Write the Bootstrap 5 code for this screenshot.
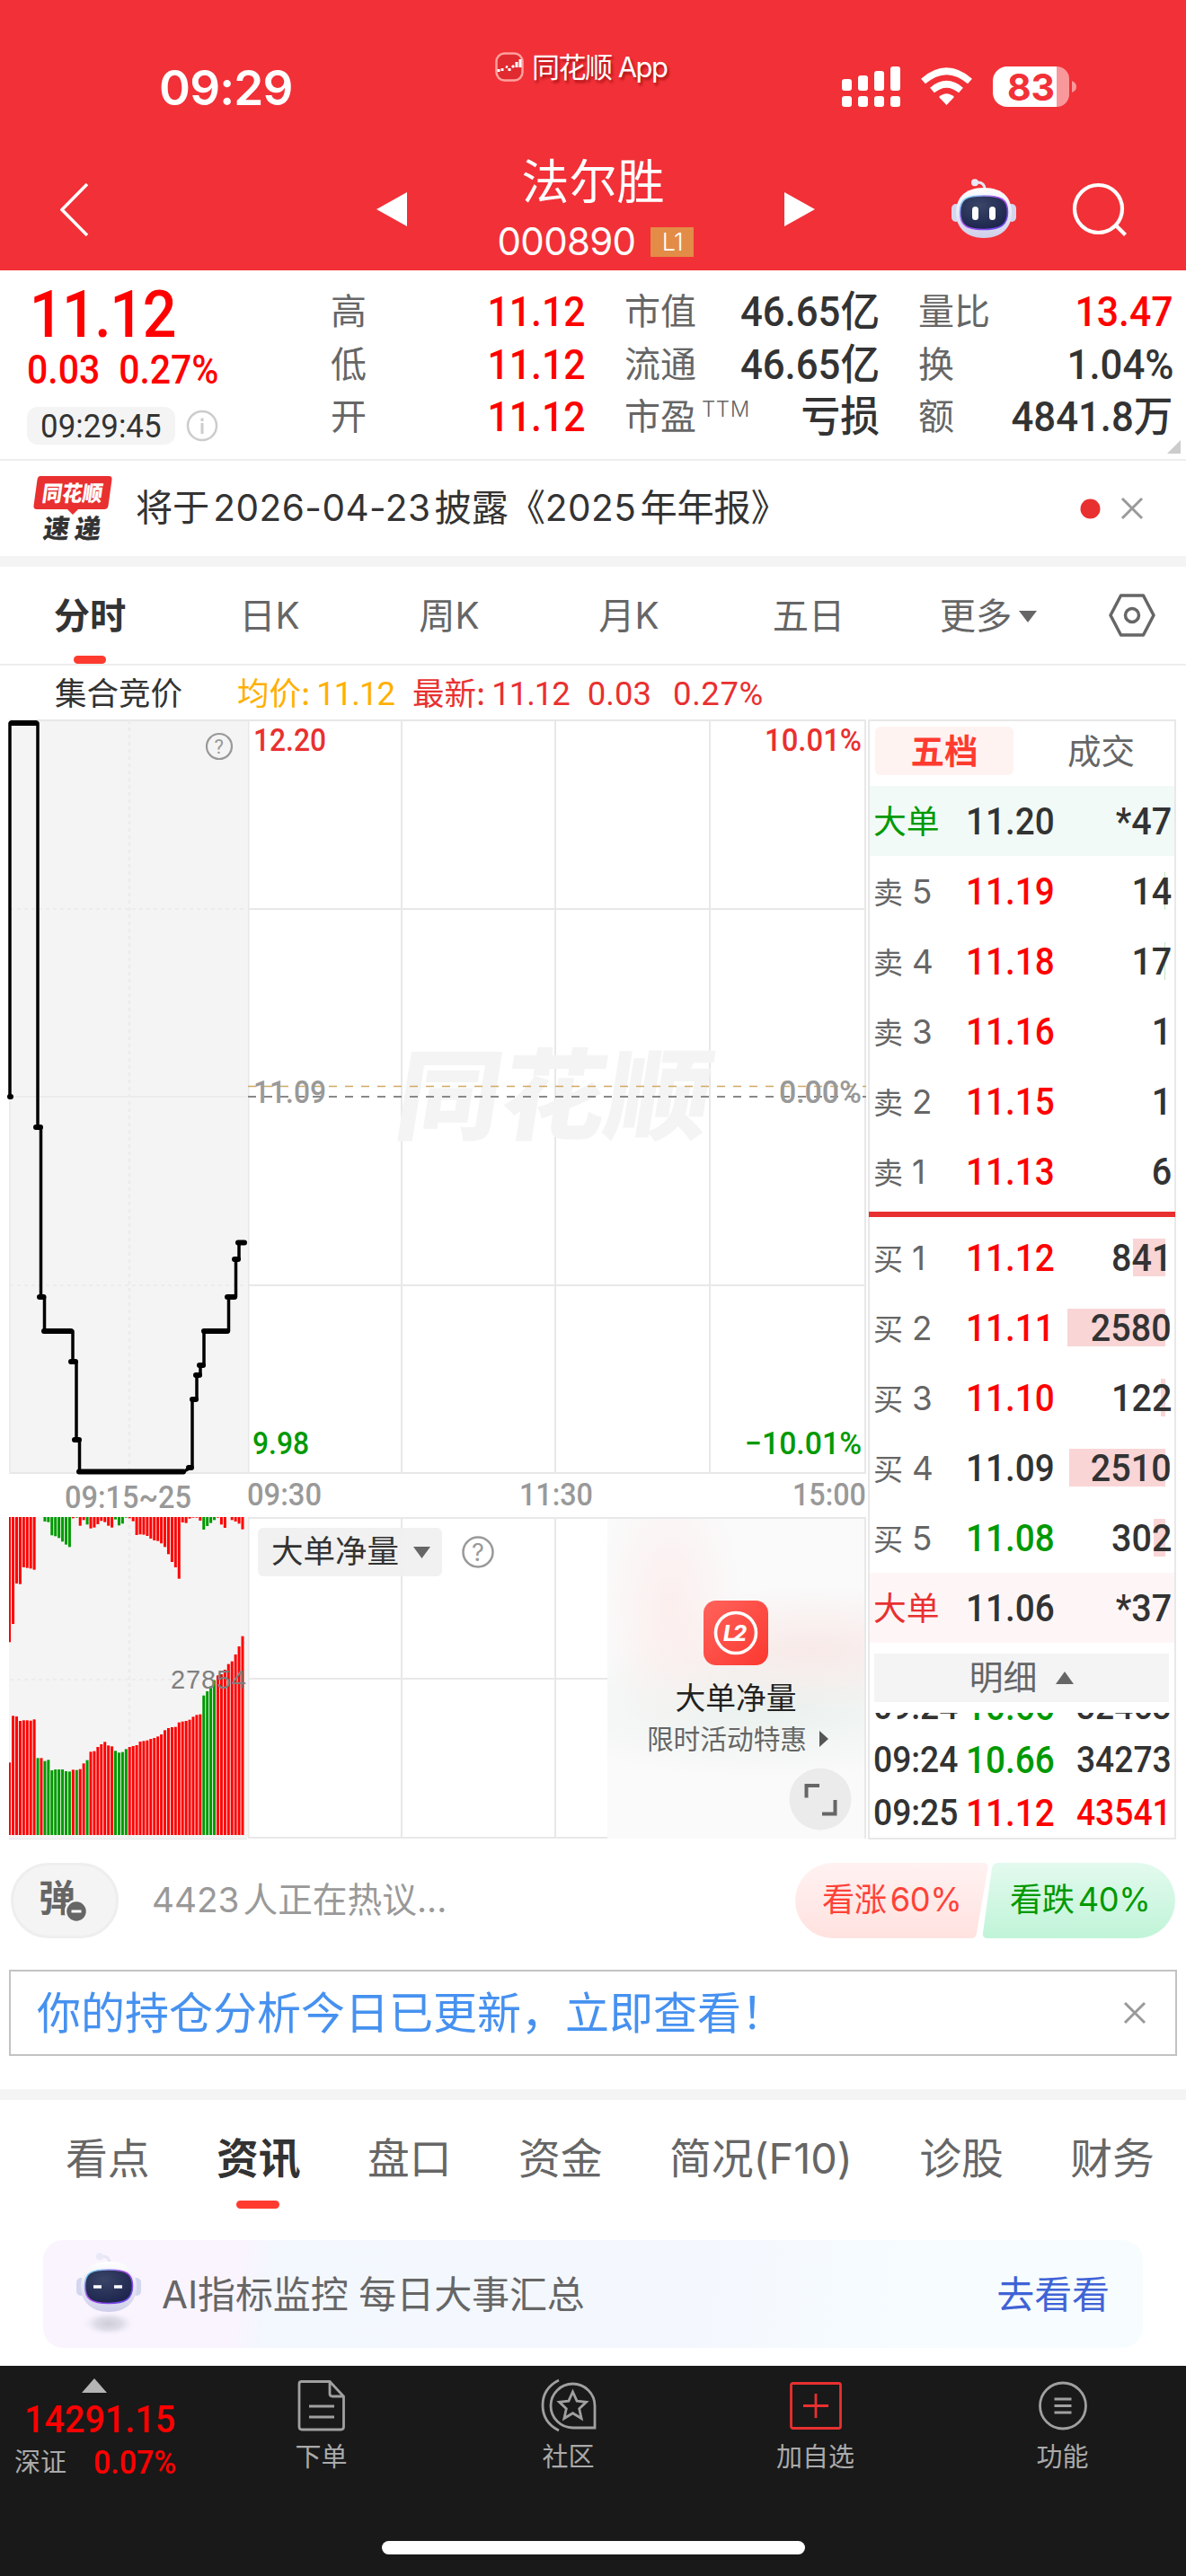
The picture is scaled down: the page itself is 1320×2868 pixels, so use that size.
<!DOCTYPE html>
<html lang="zh-CN">
<head>
<meta charset="utf-8">
<meta name="viewport" content="width=device-width, initial-scale=1">
<title>法尔胜 000890</title>
<link href="https://cdn.jsdelivr.net/npm/bootstrap@5.3.0/dist/css/bootstrap.min.css" rel="stylesheet">
<style>
body{width:1320px;height:2868px;overflow:hidden;background:#fff;color:#333;font-family:Inter,"Noto Sans CJK SC",sans-serif;font-size:40px;line-height:1}
svg{display:block;flex:none}
.dig{font-family:Roboto,"Noto Sans CJK SC",sans-serif;font-weight:500;white-space:nowrap}
.slim{display:inline-block;transform:scaleX(.93);transform-origin:left center}
.slim-r{display:inline-block;transform:scaleX(.93);transform-origin:right center}
.c-up{color:#f00}.c-down{color:#090}.c-sub{color:#666}.c-dim{color:#999}.c-red{color:#e93030}
.top-head{background:#f23037;color:#fff;height:301px}
.status-row{height:140px;padding:54px 122px 0 177px}
.clock{font-size:53px;font-weight:600;width:373px;letter-spacing:-.8px;padding-top:18px}
.app-tag{font-size:31px;width:388px;height:40px;gap:9px;padding-left:2px;text-shadow:2px 3px 3px rgba(120,0,0,.6);letter-spacing:-1.5px;white-space:nowrap}
.title-row{height:161px;padding:0 58px 0 67px}
.nav-mid{width:420px;padding-top:35px}
.stock-name{font-size:53px;line-height:56px;margin-right:6px}
.stock-code{font-size:42px;height:40px;letter-spacing:-.7px;margin-top:18px}
.lv-tag{background:#e38c48;font-size:27px;width:48px;height:33px;line-height:33px;font-weight:300}
.quote{height:212px;border-bottom:2px solid #eee}
.quote-left{width:368px;padding:12px 0 0 30px}
.big-price{font-size:73px;letter-spacing:-1.6px;line-height:74px;height:75px;padding-left:3px;transform:scaleX(.91);transform-origin:left center}
.chg{font-size:45px;gap:23px;height:61px;line-height:48px;transform:scaleX(.91);transform-origin:left center}
.time-chip{background:#f4f4f4;border-radius:12px;width:165px;height:42px;line-height:42px;font-size:37.5px;font-weight:400}
.time-chip span{transform-origin:center}
.q-group{width:282px;padding-top:17px}
.q-group>div{height:58.600px}
.q-group .dig{font-size:46.5px;display:inline-block;transform:scaleX(.94);transform-origin:right center;margin-right:-2px}
.q-group .dig.c-up{transform:scaleX(.92)}
.ttm{font-size:24px;font-weight:300;letter-spacing:.6px;margin:-16px auto 0 6px}
.fold{position:absolute;right:6px;bottom:6px}
.news{height:106px;padding:0 47px 0 37px}
.news-text{font-size:41.2px;letter-spacing:-.1px;white-space:nowrap}
.news-text span{font-size:40.5px;letter-spacing:.5px}
.band{height:12px;background:#f4f4f4}
.k-tabs{height:110px;border-bottom:2px solid #eee;color:#666;font-size:40.3px}
.k-tabs>div{width:200px;position:relative;height:100%;padding-top:3px}
.k-tabs .on{color:#333;font-weight:600}
.k-tabs .on::after{content:"";position:absolute;left:82px;bottom:0;width:36px;height:9px;border-radius:5px;background:#ff3b30}
.legend-row{height:60px;font-size:35.5px;padding:4px 0 0 61px;white-space:nowrap}
.legend-row .dig{font-weight:400;font-size:36.5px}
.legend-row .in{letter-spacing:-1px;margin-left:7px}
.chart-zone{height:1247px}
.plot{position:relative;width:966px}
.pick{position:absolute;left:287px;top:900px;width:205px;height:54px;border-radius:6px;background:rgba(240,240,240,.92);font-size:35.5px;padding:0 13px 0 15px}
.ask{position:absolute;left:514px;top:908px}
.promo{position:absolute;left:676px;top:890px;width:286px;height:356px;padding-top:91px;background:radial-gradient(ellipse 80px 150px at 70px 95px,rgba(252,236,235,.8),transparent),radial-gradient(ellipse 220px 70px at 230px 145px,rgba(248,230,228,.8),transparent),radial-gradient(ellipse 270px 80px at 180px 210px,rgba(232,240,236,.9),transparent),#fafafa}
.promo-t{font-size:33.8px;color:#222;margin-top:19px;line-height:36px}
.promo-s{font-size:29.7px;color:#666;margin-top:11px;line-height:32px;gap:14px;padding-left:4px}
.expand{position:absolute;right:14px;bottom:9px}
.book{width:343px;border:2px solid #e8e8e8}
.bk-tabs{height:72px;padding:6px 8px 0 6px;font-size:37.5px}
.bk-tabs>div{height:54px;width:50%;border-radius:6px;padding-top:2px}
.bk-tabs .on{background:#fff3f2;color:#ff3b30;font-weight:600;flex:none;width:154px}
.lv{position:relative;height:78px;padding:3px 5px 0 4px}
.lv .nm{width:103px;font-size:36.8px;color:#666;white-space:nowrap}
.lv .nm span{font-size:33px;margin-right:10px}
.lv .dig{font-size:42.5px}
.lv .slim{transform:scaleX(.91)}
.lv .qty{margin-right:-2px}
.vol{position:absolute;right:10px;top:18px;height:42px;background:#f9d5d6}
.vol.ask-vol{background:#bfe6bf}
.split{height:18px;padding-top:6px;margin:0 -1px}
.split div{height:6px;background:#e93030}
.detail-bar{height:54px;margin:12px 6px 12px 5px;background:#f4f4f4;color:#666;font-size:37.8px;gap:21px}
.ticks{height:138px;overflow:hidden}
.ticks>div{height:59px;flex:none;padding:7px 3px 0 4px}
.ticks .dig{font-size:40px;line-height:46px}
.ticks .hm{width:103px}
.ticks .px{font-size:42.5px;transform:scaleX(.91)}
.talk{height:145px;padding:0 12px 10px}
.dan{position:relative;width:120px;height:84px;border-radius:42px;background:#f4f4f4;border:3px solid #eee;font-size:41px;font-weight:700;color:#666;padding:0 17px 4px 0}
.dan b{font-weight:700}
.dan svg{position:absolute;left:57px;top:38px}
.talk-text{font-size:38.7px;margin-left:37px;color:#999;letter-spacing:0}
.vote{position:relative;width:423px;height:84px}
.vote svg{position:absolute;left:0;top:0}
.vote div{position:relative;font-size:36.2px;width:50%;letter-spacing:-.3px}
.notice{height:96px;margin:0 10px;border:2px solid #c3c3c3;padding:0 32px 0 29px;color:#4691f0;font-size:49px}
.info-tabs{height:134px;padding:0 0 3px 73px;gap:74.400px;color:#666;font-size:46.8px;white-space:nowrap}
.info-tabs .on{position:relative;color:#333;font-weight:600}
.info-tabs .on::after{content:"";position:absolute;left:22px;top:70px;width:48px;height:9px;border-radius:5px;background:#ff3b30}
.ai{height:120px;margin:22px 48px 20px;border-radius:22px;background:linear-gradient(98deg,#faf4ff 18%,#f3f7fe 21%,#f4f8fe 60%,#f7fdff 85%);color:#666;font-size:42px;padding:2px 37px 0 37px;letter-spacing:-.1px}
.foot{background:#191919;height:234px;color:#aaa;font-size:29px}
.foot .idx{width:220px;padding:14px 0 0 16px}
.foot .idx-n{font-size:42.5px;margin:9px 0 0 11px}
.foot .idx-p{font-size:36.5px;margin-left:30px}
.foot .cell{width:275px;padding-top:14px;gap:13px}
.home-ind{width:471px;height:15px;border-radius:8px;background:#fff;position:absolute;left:425px;bottom:24px}
</style>
</head>
<body>
<svg width="0" height="0" class="position-absolute">
  <defs>
    <linearGradient id="shell" x1="0" y1="0" x2="0" y2="1"><stop offset="0" stop-color="#fff"/><stop offset="1" stop-color="#cfcfea"/></linearGradient>
    <linearGradient id="rim" x1="0" y1="0" x2="1" y2="1"><stop offset="0" stop-color="#6ff0f0"/><stop offset=".45" stop-color="#b04cf0"/><stop offset="1" stop-color="#5a48e8"/></linearGradient>
    <radialGradient id="visor" cx=".4" cy=".3" r=".8"><stop offset="0" stop-color="#3a4568"/><stop offset="1" stop-color="#19214a"/></radialGradient>
    <symbol id="bot" viewBox="0 0 72 66">
      <path d="M37 12Q37 4 29 4" fill="none" stroke="#e6e6f4" stroke-width="3"/><circle cx="26" cy="4.2" r="4" fill="#e9e9f6"/>
      <rect x="0" y="28" width="10" height="20" rx="5" fill="#d4d6ee"/><rect x="62" y="28" width="10" height="20" rx="5" fill="#d4d6ee"/>
      <path d="M36 10C58 10 67 22 67 38S56 66 36 66 5 54 5 38 14 10 36 10Z" fill="url(#shell)"/>
      <path d="M36 19C55 19 62.500 23 62.500 37S55 56.500 36 56.500 9.500 52 9.500 37 17 19 36 19Z" fill="url(#visor)" stroke="url(#rim)" stroke-width="1.600"/>
    </symbol>
    <linearGradient id="gUp" x1="0" y1="0" x2="0" y2="1"><stop offset="0" stop-color="#fff2f1"/><stop offset="1" stop-color="#ffe2e0"/></linearGradient>
    <linearGradient id="gDn" x1="0" y1="0" x2="0" y2="1"><stop offset="0" stop-color="#e3faee"/><stop offset="1" stop-color="#c0f4d8"/></linearGradient>
    <linearGradient id="gL2" x1="0" y1="0" x2="1" y2="1"><stop offset="0" stop-color="#ff635c"/><stop offset="1" stop-color="#fb382f"/></linearGradient>
  </defs>
</svg>

<header class="top-head">
  <div class="status-row d-flex align-items-start">
    <div class="clock">09:29</div>
    <div class="app-tag d-flex align-items-center">
      <svg width="32" height="33" viewBox="0 0 32 33"><rect x="1.500" y="1.500" width="29" height="30" rx="9" fill="#e02a30" stroke="#ffa09c" stroke-width="2.500"/><path d="M4 22V19M8 21V18M12 16l2 1M16 18v3M19 15l2 2M24 17v-6M28 17V8" stroke="#fff" stroke-width="3"/></svg>
      <span>同花顺 App</span>
    </div>
    <svg class="ms-auto" width="262" height="66" viewBox="936 54 262 66">
      <g fill="#fff"><rect x="937" y="88" width="11" height="13" rx="3"/><rect x="955" y="84" width="11" height="17" rx="3"/><rect x="973" y="79" width="11" height="22" rx="3"/><rect x="991" y="74" width="11" height="27" rx="3"/>
      <rect x="937" y="107" width="11" height="12" rx="3"/><rect x="955" y="107" width="11" height="12" rx="3"/><rect x="973" y="107" width="11" height="12" rx="3"/><rect x="991" y="107" width="11" height="12" rx="3"/>
      <path d="M1053.500 117l-8.500-9q8.500-7.500 17 0z"/></g>
      <path d="M1037.500 100.500q16-13.500 32 0M1027.500 90.500q26-22.500 52 0" fill="none" stroke="#fff" stroke-width="7.500"/>
      <path d="M1121 74h55v45h-55a16 16 0 0 1-16-16v-13a16 16 0 0 1 16-16z" fill="#fff"/><path d="M1176 74a14 14 0 0 1 14 14v17a14 14 0 0 1-14 14zM1193 90q5 2 5 6.500t-5 6.500z" fill="#fff" fill-opacity=".5"/>
      <text x="1121" y="111.500" font-size="41" font-weight="700" fill="#f23037" textLength="53">83</text>
    </svg>
  </div>
  <div class="title-row d-flex align-items-start">
    <svg width="33" height="126" viewBox="67 140 33 126"><path d="M97 205L69 233.500 97 262" fill="none" stroke="#fff" stroke-width="3.500"/></svg>
    <svg class="ms-auto" width="34" height="126" viewBox="419 140 34 126"><path d="M453 214v38l-34-19z" fill="#fff"/></svg>
    <div class="nav-mid d-flex flex-column align-items-center">
      <div class="stock-name">法尔胜</div>
      <div class="stock-code d-flex align-items-center"><span>000890</span><span class="lv-tag text-center" style="margin-left:17px">L1</span></div>
    </div>
    <svg width="34" height="126" viewBox="873 140 34 126"><path d="M873 214v38l34-19z" fill="#fff"/></svg>
    <svg style="margin-left:152px" width="203" height="126" viewBox="1059 140 203 126">
      <use href="#bot" x="1059" y="199" width="72" height="66"/><rect x="1082" y="230" width="7" height="15" rx="3.500" fill="#fff"/><rect x="1101" y="230" width="7" height="15" rx="3.500" fill="#fff"/>
      <circle cx="1222.500" cy="232.500" r="26.500" fill="none" stroke="#fff" stroke-width="4.200"/><path d="M1241.500 250.500l11 11" stroke="#fff" stroke-width="4.200"/>
    </svg>
  </div>
</header>

<section class="quote d-flex position-relative">
  <div class="quote-left">
    <div class="big-price dig c-up">11.12</div>
    <div class="chg dig c-up d-flex"><span>0.03</span><span>0.27%</span></div>
    <div class="d-flex align-items-center" style="gap:12px;margin-top:4px">
      <div class="time-chip dig text-center"><span class="slim">09:29:45</span></div>
      <svg width="36" height="36"><circle cx="18" cy="18" r="16" fill="none" stroke="#ccc" stroke-width="2.500"/><path d="M18 9.500v3.500M18 15v12" stroke="#ccc" stroke-width="3"/></svg>
    </div>
  </div>
  <div class="q-group">
    <div class="d-flex align-items-center justify-content-between"><span class="c-sub">高</span><span class="dig c-up">11.12</span></div>
    <div class="d-flex align-items-center justify-content-between"><span class="c-sub">低</span><span class="dig c-up">11.12</span></div>
    <div class="d-flex align-items-center justify-content-between"><span class="c-sub">开</span><span class="dig c-up">11.12</span></div>
  </div>
  <div class="q-group" style="margin-left:45px">
    <div class="d-flex align-items-center justify-content-between"><span class="c-sub">市值</span><span class="dig">46.65亿</span></div>
    <div class="d-flex align-items-center justify-content-between"><span class="c-sub">流通</span><span class="dig">46.65亿</span></div>
    <div class="d-flex align-items-center justify-content-between"><span class="c-sub">市盈</span><span class="ttm c-sub">TTM</span><span class="dig">亏损</span></div>
  </div>
  <div class="q-group" style="margin-left:45px">
    <div class="d-flex align-items-center justify-content-between"><span class="c-sub">量比</span><span class="dig c-up">13.47</span></div>
    <div class="d-flex align-items-center justify-content-between"><span class="c-sub">换</span><span class="dig">1.04%</span></div>
    <div class="d-flex align-items-center justify-content-between"><span class="c-sub">额</span><span class="dig">4841.8万</span></div>
  </div>
  <svg class="fold" width="15" height="15"><path d="M15 0v15H0z" fill="#ccc"/></svg>
</section>

<section class="news d-flex align-items-center">
  <svg width="89" height="76" viewBox="37 527 89 76"><path d="M45 529h76q4 0 3.500 4l-4 29q-.6 4-4.500 4H87l-6 6-6-6H41q-4 0-3.500-4l4-29q.6-4 3.500-4z" fill="#e93030"/>
    <text transform="translate(46 557) skewX(-8)" font-size="24" font-weight="900" fill="#fff" textLength="67" lengthAdjust="spacingAndGlyphs">同花顺</text>
    <text transform="translate(47 597.500) skewX(-8)" font-size="29" font-weight="900" fill="#333" textLength="64">速递</text></svg>
  <div class="news-text" style="margin-left:25px">将于<span class="mx-1">2026-04-23</span>披露《<span>2025</span><b class="ms-1 fw-normal">年年报》</b></div>
  <svg class="ms-auto" width="72" height="28" viewBox="1201 551 72 28"><circle cx="1213.500" cy="565.500" r="11" fill="#e93030"/><path d="M1249 554l22 22M1271 554l-22 22" stroke="#999" stroke-width="3"/></svg>
</section>
<div class="band"></div>

<nav class="k-tabs d-flex">
  <div class="on d-flex align-items-center justify-content-center">分时</div>
  <div class="d-flex align-items-center justify-content-center">日K</div>
  <div class="d-flex align-items-center justify-content-center">周K</div>
  <div class="d-flex align-items-center justify-content-center">月K</div>
  <div class="d-flex align-items-center justify-content-center">五日</div>
  <div class="d-flex align-items-center justify-content-center gap-2">更多<svg width="20" height="13"><path d="M0 0h20L10 13z" fill="#666"/></svg></div>
  <svg class="align-self-center" style="margin-left:34px" width="52" height="48" viewBox="0 0 52 48"><path d="M13.500 2h25L50 24 38.500 46h-25L2 24z" fill="none" stroke="#666" stroke-width="3.500" stroke-linejoin="round"/><circle cx="26" cy="24" r="7.500" fill="none" stroke="#666" stroke-width="3.500"/></svg>
</nav>

<div class="legend-row d-flex align-items-center">
  <span>集合竞价</span>
  <span style="margin-left:61px;color:#ffb000">均价:<span class="dig in">11.12</span></span>
  <span class="c-red" style="margin-left:20px">最新:<span class="dig in">11.12</span></span>
  <span class="dig c-red" style="margin-left:20px">0.03</span>
  <span class="dig c-red" style="margin-left:24px;letter-spacing:.6px">0.27%</span>
</div>

<section class="chart-zone d-flex">
  <div class="plot">
    <svg id="plot" width="966" height="1247" viewBox="0 801 966 1247" font-family="Roboto,'Noto Sans CJK SC',sans-serif" font-weight="500" font-size="35">
      <rect x="10" y="801" width="265" height="840" fill="#f4f4f4"/><rect x="10" y="1689" width="265" height="359" fill="#f4f4f4"/>
      <g fill="none" stroke="#e8e8e8" stroke-width="2">
        <path d="M10 802H964M10 1640H964M276.500 802V1640M963 802V1640M277 1012H963M277 1431H963M447 802V1640M618 802V1640M790 802V1640"/>
        <path d="M276 1690H964M276 1869H963M276.500 1690V2046M963 1690V2046M276 2046H964M10 2048H275M447 1690V2046M618 1690V2046"/>
        <path d="M11 802V1640M11 1221H275" stroke="#ececec"/>
        <path d="M11 1012H275M11 1431H275M11 1870H275" stroke="#ececec" stroke-dasharray="4 4"/>
        <path d="M144 802V1640M144 1690V2046" stroke="#ececec" stroke-width="3" stroke-dasharray="4 4"/>
      </g>
      <text transform="translate(436 1260) skewX(-9)" font-family="Noto Sans CJK SC" font-size="110" font-weight="900" fill="#f4f4f4" textLength="350" lengthAdjust="spacingAndGlyphs">同花顺</text>
      <path d="M276 1209.500H964" stroke="#d0a866" stroke-width="1.500" stroke-dasharray="9 9"/>
      <path d="M276 1221H964" stroke="#888" stroke-width="2" stroke-dasharray="9 9"/>
      <path fill="none" stroke="#000" stroke-width="3.500" stroke-linejoin="round" d="M13 1221h-2V805H42V1255H45.500V1444H49.500V1482H81V1516H85V1603H88.500V1638H205L214 1633V1558H219V1531H223V1520H227V1482H254.500V1444H262.500V1402H266V1383.500H273"/>
      <g stroke="#000" stroke-width="6" stroke-linecap="round"><path d="M13 805H40M40 1255h5M44 1444h4.500M49 1482H79M79 1516h5M83 1603h5M88 1638.500H204M210 1634h3M214 1558h4M218 1531h4M222 1520h4M227 1482H253M253 1444h8M261 1402h4M265 1383.500h7M11 1221h1"/></g>
      <g fill="#e93030"><text x="282" y="836" textLength="81" lengthAdjust="spacingAndGlyphs">12.20</text><text x="851" y="836" textLength="108" lengthAdjust="spacingAndGlyphs">10.01%</text></g>
      <g fill="#999"><text x="282" y="1227.500" textLength="81" lengthAdjust="spacingAndGlyphs">11.09</text><text x="867" y="1227.500" textLength="92" lengthAdjust="spacingAndGlyphs">0.00%</text>
        <text x="72" y="1678.500" textLength="141" lengthAdjust="spacingAndGlyphs">09:15~25</text><text x="275" y="1675.500" textLength="83" lengthAdjust="spacingAndGlyphs">09:30</text><text x="578" y="1675.500" textLength="82" lengthAdjust="spacingAndGlyphs">11:30</text><text x="882" y="1675.500" textLength="82" lengthAdjust="spacingAndGlyphs">15:00</text></g>
      <g fill="#090"><text x="281" y="1619" textLength="63" lengthAdjust="spacingAndGlyphs">9.98</text><text x="829" y="1619" textLength="130" lengthAdjust="spacingAndGlyphs">−10.01%</text></g>
      <g id="bars"></g>
      <text x="190" y="1880" font-family="Liberation Sans" font-weight="400" font-size="29" fill="#808080" textLength="84">27854</text>
      <g transform="translate(244 831)"><circle r="14" fill="none" stroke="#999" stroke-width="2.200"/><text x="-5.500" y="8" font-size="22" font-weight="400" fill="#999">?</text></g>
    </svg>
    <div class="pick d-flex align-items-center justify-content-between"><span>大单净量</span><svg width="19" height="13"><path d="M0 0h19L9.500 13z" fill="#666"/></svg></div>
    <svg class="ask" width="36" height="38" viewBox="-18 -19 36 38"><circle r="16.500" fill="none" stroke="#999" stroke-width="2.500"/><text x="-7" y="9.500" font-size="27" fill="#999">?</text></svg>
    <div class="promo d-flex flex-column align-items-center">
      <svg width="72" height="72" viewBox="-36 -36 72 72"><rect x="-36" y="-36" width="72" height="72" rx="14" fill="url(#gL2)"/><circle r="22.500" fill="none" stroke="#fff" stroke-width="3.600"/><text x="-14" y="9" font-size="24" font-weight="800" font-style="italic" fill="#fff" textLength="26">L2</text></svg>
      <div class="promo-t">大单净量</div>
      <div class="promo-s d-flex align-items-center">限时活动特惠<svg width="10" height="18"><path d="M0 0l10 9L0 18z" fill="#555"/></svg></div>
      <svg class="expand" width="70" height="70"><circle cx="35" cy="35" r="34.500" fill="#ebebeb"/><path d="M19.500 33.500V20H34M37 51.500H51.500V36" fill="none" stroke="#666" stroke-width="4"/></svg>
    </div>
  </div>

  <aside class="book">
    <div class="bk-tabs d-flex"><div class="on d-flex align-items-center justify-content-center">五档</div><div class="c-sub d-flex align-items-center justify-content-center flex-grow-1 ps-4">成交</div></div>
    <div id="sell"></div>
    <div class="split"><div></div></div>
    <div id="buy"></div>
    <div class="detail-bar d-flex align-items-center justify-content-center">明细<svg width="20" height="14"><path d="M0 14h20L10 0z" fill="#666"/></svg></div>
    <div class="ticks d-flex flex-column justify-content-end">
      <div class="d-flex align-items-center"><div class="hm"><span class="dig slim">09:24</span></div><span class="dig px slim c-down">10.66</span><span class="dig slim-r ms-auto">32463</span></div>
      <div class="d-flex align-items-center"><div class="hm"><span class="dig slim">09:24</span></div><span class="dig px slim c-down">10.66</span><span class="dig slim-r ms-auto">34273</span></div>
      <div class="d-flex align-items-center"><div class="hm"><span class="dig slim">09:25</span></div><span class="dig px slim c-up">11.12</span><span class="dig slim-r ms-auto c-up">43541</span></div>
    </div>
  </aside>
</section>

<section class="talk d-flex align-items-center">
  <div class="dan d-flex align-items-center justify-content-center"><b>弹</b><svg width="26" height="26"><circle cx="13" cy="13" r="12" fill="#666" stroke="#f4f4f4" stroke-width="2.500"/><path d="M7.500 13h11" stroke="#fff" stroke-width="3"/></svg></div>
  <div class="talk-text">4423<span class="ms-1">人正在热议...</span></div>
  <div class="vote d-flex align-items-center ms-auto">
    <svg width="423" height="84"><path d="M42 0H210q5 0 4.500 5L202 78q-1 6-6 6H42A42 42 0 0 1 42 0z" fill="url(#gUp)"/><path d="M381 0H225q-5 0-6 6L209 78q-1 6 5 6H381A42 42 0 0 0 381 0z" fill="url(#gDn)"/></svg>
    <div class="text-center ps-1" style="color:#ff4238">看涨<span class="ms-1">60%</span></div><div class="text-center c-down">看跌<span class="ms-1">40%</span></div>
  </div>
</section>

<section class="notice d-flex align-items-center justify-content-between"><span>你的持仓分析今日已更新，立即查看！</span><svg width="26" height="26"><path d="M2 2l22 22M24 2L2 24" stroke="#999" stroke-width="3"/></svg></section>
<div class="band" style="margin-top:37px"></div>

<nav class="info-tabs d-flex align-items-center"><span>看点</span><span class="on">资讯</span><span>盘口</span><span>资金</span><span>简况(F10)</span><span>诊股</span><span>财务</span></nav>
<section class="ai d-flex align-items-center">
  <svg width="72" height="96" viewBox="0 0 72 96"><defs><radialGradient id="shade"><stop offset="0" stop-color="#cfcdd8"/><stop offset=".5" stop-color="#dfdde8"/><stop offset="1" stop-color="#f6f2fc" stop-opacity="0"/></radialGradient></defs><ellipse cx="36" cy="80" rx="30" ry="14" fill="url(#shade)"/><use href="#bot" y="1" width="72" height="66"/><path d="M19 39h9M42 39h9" stroke="#fff" stroke-width="3.500"/></svg>
  <span style="margin-left:23px">AI指标监控 每日大事汇总</span><span class="ms-auto" style="color:#3f63d6">去看看</span>
</section>

<footer class="foot d-flex position-relative">
  <div class="idx">
    <svg style="margin-left:75px" width="28" height="16"><path d="M0 16L14 0l14 16z" fill="#b5b5b5"/></svg>
    <div class="idx-n dig slim c-up">14291.15</div>
    <div class="d-flex align-items-center" style="margin-top:8px"><span>深证</span><span class="idx-p dig slim c-up">0.07%</span></div>
  </div>
  <div class="cell d-flex flex-column align-items-center"><svg width="54" height="60" viewBox="0 0 54 60"><path d="M4 3.500H36L51.500 20V54q0 3-3 3H5q-3 0-3-3V6q0-2.500 2.500-2.500zM36 3.500V17q0 3 3 3h12M13 31h28M13 43h28" fill="none" stroke="#a0a0a0" stroke-width="2.800"/></svg><span>下单</span></div>
  <div class="cell d-flex flex-column align-items-center"><svg width="62" height="60" viewBox="0 0 62 60"><path d="M20 2Q2 11 2 30t18 28M35.500 6a24.500 24.500 0 1 0 0 49H60V30.500A24.500 24.500 0 0 0 35.500 6z" fill="none" stroke="#a0a0a0" stroke-width="2.800"/><path d="M35.500 15l4.600 10.200 10.400 1.100-7.800 7.400 2.400 10.800-9.600-5.800-9.600 5.800 2.400-10.800-7.800-7.400 10.400-1.100z" fill="none" stroke="#a0a0a0" stroke-width="2.800"/></svg><span>社区</span></div>
  <div class="cell d-flex flex-column align-items-center"><svg width="58" height="60" viewBox="0 0 58 60"><rect x="1.500" y="5.500" width="55" height="50" rx="2" fill="none" stroke="#e93030" stroke-width="2.800"/><path d="M29 17v27M15 30.500h28" stroke="#e93030" stroke-width="2.800"/></svg><span>加自选</span></div>
  <div class="cell d-flex flex-column align-items-center"><svg width="56" height="60" viewBox="0 0 56 60"><circle cx="28" cy="30.500" r="25.500" fill="none" stroke="#a0a0a0" stroke-width="2.800"/><path d="M18.500 23h19M18.500 30.500h19M18.500 38h19" stroke="#a0a0a0" stroke-width="3"/></svg><span>功能</span></div>
  <div class="home-ind"></div>
</footer>

<script>
// auction bars: hanging depth and rising top, both in thirds of a pixel; a negative value is a green bar
const up = [418,357,222,224,168,170,172,176,0,0,-15,-17,-61,-64,-70,-82,-92,-100,4,-2,29,10,-25,38,35,24,13,17,29,35,-8,-28,-22,-2,4,14,60,58,59,63,72,78,80,88,100,124,150,168,206,18,20,5,2,2,12,-42,-30,-20,-10,2,25,36,0,10,15,22,41];
const top3 = [967,811,813,828,826,826,827,823,-952,952,-962,-958,-993,-990,-990,-990,-996,-997,991,-992,989,970,-959,931,929,915,906,898,910,913,-928,-934,-932,-922,915,912,909,897,895,893,888,885,880,873,859,852,849,848,833,830,828,824,814,808,806,-743,-729,-712,-692,676,672,657,638,629,606,579,545];
let out = '';
top3.forEach((t, i) => {
  const x = i ? 13.05 + (i - 1) * 3.93 : 10, w = i ? 3 : 2;
  const y = 1640 + Math.abs(t) / 3, d = Math.abs(up[i]) / 3;
  out += `<rect x="${x}" y="${y}" width="${w}" height="${2043 - y}" fill="${t < 0 ? '#090' : '#f00'}"/>`;
  if (d) out += `<rect x="${x}" y="1689" width="${w}" height="${d}" fill="${up[i] < 0 ? '#090' : '#f00'}"/>`;
});
document.getElementById('bars').innerHTML = out;

// order book: name, level, price, colour, quantity, bar width, bar class
const row = ([n, l, p, c, q, b, k]) => `<div class="lv d-flex align-items-center">${b ? `<div class="vol ${k || ''}" style="width:${b}px"></div>` : ''}<div class="nm"><span>${n}</span>${l}</div><div class="dig slim ${c}">${p}</div><div class="dig qty slim-r ms-auto">${q}</div></div>`;
const big = (p, q, c, bg) => `<div class="lv d-flex align-items-center" style="background:${bg}"><div class="nm" style="color:${c}">大单</div><div class="dig slim">${p}</div><div class="dig qty slim-r ms-auto">*${q}</div></div>`;
document.getElementById('sell').innerHTML = big('11.20', 47, '#090', '#f1faf6') + [['卖',5,'11.19','c-up',14,1,'ask-vol'],['卖',4,'11.18','c-up',17,1,'ask-vol'],['卖',3,'11.16','c-up',1],['卖',2,'11.15','c-up',1],['卖',1,'11.13','c-up',6]].map(row).join('');
document.getElementById('buy').innerHTML = [['买',1,'11.12','c-up',841,36],['买',2,'11.11','c-up',2580,109],['买',3,'11.10','c-up',122,5],['买',4,'11.09','',2510,107],['买',5,'11.08','c-down',302,13]].map(row).join('') + big('11.06', 37, '#e93030', '#fef6f6');
</script>
<script src="https://cdn.jsdelivr.net/npm/bootstrap@5.3.0/dist/js/bootstrap.bundle.min.js"></script>
</body>
</html>
